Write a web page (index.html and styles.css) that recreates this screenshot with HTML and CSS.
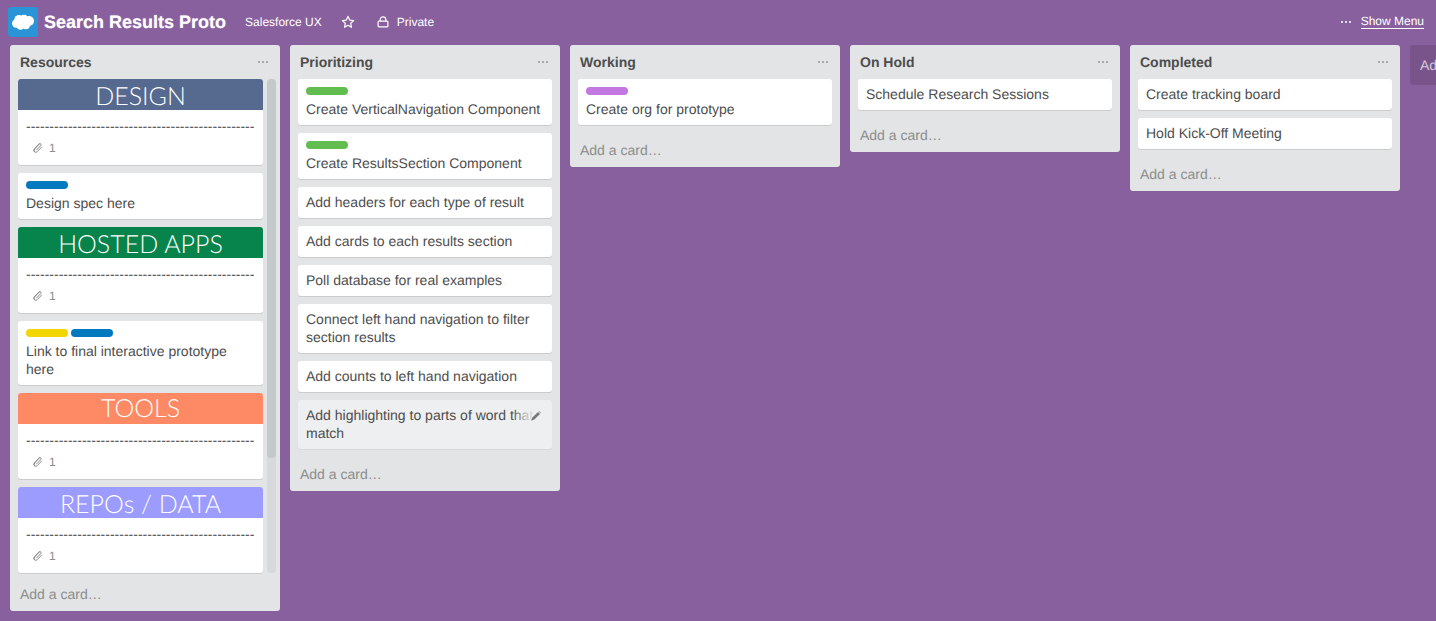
FILE: index.html
```html
<!DOCTYPE html>
<html lang="en">
<head>
<meta charset="utf-8">
<title>Search Results Proto</title>
<link rel="stylesheet" href="styles.css">
</head>
<body>
<header class="topbar">
  <div class="logo">
    <svg width="30" height="30" viewBox="0 0 30 30"><g fill="#fff"><circle cx="11" cy="12.5" r="4.6"/><circle cx="16" cy="11.6" r="3.8"/><circle cx="21" cy="14" r="5"/><circle cx="8.2" cy="16.5" r="4.2"/><circle cx="12.5" cy="18.5" r="4.2"/><circle cx="18" cy="18.5" r="3.8"/></g></svg>
  </div>
  <h1 class="board-title">Search Results Proto</h1>
  <span class="top-link team">Salesforce UX</span>
  <svg class="star" width="14" height="14" viewBox="0 0 14 14"><path d="M7 1.4l1.7 3.7 4 .5-3 2.7.8 4L7 10.3l-3.5 2 .8-4-3-2.7 4-.5z" fill="none" stroke="#fff" stroke-width="1.2" stroke-linejoin="round"/></svg>
  <svg class="lock" width="12" height="12" viewBox="0 0 12 12"><path d="M3.2 5V3.6a2.8 2.8 0 0 1 5.6 0V5" fill="none" stroke="#fff" stroke-width="1.2"/><rect x="1.1" y="5.1" width="9.8" height="5.8" rx="1" fill="none" stroke="#fff" stroke-width="1.2"/></svg>
  <span class="top-link private">Private</span>
  <div class="menu">
    <span class="menu-dots"><i></i><i></i><i></i></span>
    <span class="show-menu">Show Menu</span>
  </div>
</header>

<main class="board">
  <section class="list">
    <div class="list-head"><h2>Resources</h2><span class="dots"><i></i><i></i><i></i></span></div>
    <div class="scroll-row">
      <div class="cards narrow">
        <article class="card"><div class="cover c-design">DESIGN</div><div class="body"><p>-------------------------------------------------</p><div class="badge"><svg class="clip" width="12" height="12" viewBox="0 0 12 12"><path d="M10.3 4.6 5.6 9.5a2 2 0 0 1-2.9-2.8l4.6-4.9a1.2 1.2 0 0 1 1.8 1.7L4.7 8" transform="translate(-.4 .2)" fill="none" stroke="#8c8c8c" stroke-width="1"/><path d="M8.2 1.2 2.9 6.7a2.7 2.7 0 0 0-.1 3.3" fill="none" stroke="#8c8c8c" stroke-width="1"/></svg><span>1</span></div></div></article>
        <article class="card"><div class="pad"><div class="labels"><span class="label blue"></span></div><p>Design spec here</p></div></article>
        <article class="card"><div class="cover c-hosted">HOSTED APPS</div><div class="body"><p>-------------------------------------------------</p><div class="badge"><svg class="clip" width="12" height="12" viewBox="0 0 12 12"><path d="M10.3 4.6 5.6 9.5a2 2 0 0 1-2.9-2.8l4.6-4.9a1.2 1.2 0 0 1 1.8 1.7L4.7 8" transform="translate(-.4 .2)" fill="none" stroke="#8c8c8c" stroke-width="1"/><path d="M8.2 1.2 2.9 6.7a2.7 2.7 0 0 0-.1 3.3" fill="none" stroke="#8c8c8c" stroke-width="1"/></svg><span>1</span></div></div></article>
        <article class="card"><div class="pad"><div class="labels"><span class="label yellow"></span><span class="label blue"></span></div><p>Link to final interactive prototype here</p></div></article>
        <article class="card"><div class="cover c-tools">TOOLS</div><div class="body"><p>-------------------------------------------------</p><div class="badge"><svg class="clip" width="12" height="12" viewBox="0 0 12 12"><path d="M10.3 4.6 5.6 9.5a2 2 0 0 1-2.9-2.8l4.6-4.9a1.2 1.2 0 0 1 1.8 1.7L4.7 8" transform="translate(-.4 .2)" fill="none" stroke="#8c8c8c" stroke-width="1"/><path d="M8.2 1.2 2.9 6.7a2.7 2.7 0 0 0-.1 3.3" fill="none" stroke="#8c8c8c" stroke-width="1"/></svg><span>1</span></div></div></article>
        <article class="card"><div class="cover c-repos">REPOs / DATA</div><div class="body"><p>-------------------------------------------------</p><div class="badge"><svg class="clip" width="12" height="12" viewBox="0 0 12 12"><path d="M10.3 4.6 5.6 9.5a2 2 0 0 1-2.9-2.8l4.6-4.9a1.2 1.2 0 0 1 1.8 1.7L4.7 8" transform="translate(-.4 .2)" fill="none" stroke="#8c8c8c" stroke-width="1"/><path d="M8.2 1.2 2.9 6.7a2.7 2.7 0 0 0-.1 3.3" fill="none" stroke="#8c8c8c" stroke-width="1"/></svg><span>1</span></div></div></article>
      </div>
      <div class="track"><div class="thumb"></div></div>
    </div>
    <div class="add">Add a card…</div>
  </section>

  <section class="list">
    <div class="list-head"><h2>Prioritizing</h2><span class="dots"><i></i><i></i><i></i></span></div>
    <div class="cards">
      <article class="card"><div class="pad"><div class="labels"><span class="label green"></span></div><p>Create VerticalNavigation Component</p></div></article>
      <article class="card"><div class="pad"><div class="labels"><span class="label green"></span></div><p>Create ResultsSection Component</p></div></article>
      <article class="card"><div class="pad"><p>Add headers for each type of result</p></div></article>
      <article class="card"><div class="pad"><p>Add cards to each results section</p></div></article>
      <article class="card"><div class="pad"><p>Poll database for real examples</p></div></article>
      <article class="card"><div class="pad"><p>Connect left hand navigation to filter section results</p></div></article>
      <article class="card"><div class="pad"><p>Add counts to left hand navigation</p></div></article>
      <article class="card hover"><div class="pad"><p>Add highlighting to parts of word that match</p></div><div class="edit"><svg width="12" height="12" viewBox="0 0 12 12"><path d="M1.2 10.8 2.4 7.6 8 2l2 2-5.6 5.6z" fill="#7a7a7a"/><path d="M8.8 1.2l2 2" stroke="#b5b5b5" stroke-width="1.2"/></svg></div></article>
    </div>
    <div class="add">Add a card…</div>
  </section>

  <section class="list">
    <div class="list-head"><h2>Working</h2><span class="dots"><i></i><i></i><i></i></span></div>
    <div class="cards">
      <article class="card"><div class="pad"><div class="labels"><span class="label purple"></span></div><p>Create org for prototype</p></div></article>
    </div>
    <div class="add">Add a card…</div>
  </section>

  <section class="list">
    <div class="list-head"><h2>On Hold</h2><span class="dots"><i></i><i></i><i></i></span></div>
    <div class="cards">
      <article class="card"><div class="pad"><p>Schedule Research Sessions</p></div></article>
    </div>
    <div class="add">Add a card…</div>
  </section>

  <section class="list">
    <div class="list-head"><h2>Completed</h2><span class="dots"><i></i><i></i><i></i></span></div>
    <div class="cards">
      <article class="card"><div class="pad"><p>Create tracking board</p></div></article>
      <article class="card"><div class="pad"><p>Hold Kick-Off Meeting</p></div></article>
    </div>
    <div class="add">Add a card…</div>
  </section>

  <div class="add-list">Add a list…</div>
</main>
</body>
</html>
```
FILE: styles.css
```css
* { box-sizing: border-box; }
html, body { height: 100%; }
body {
  margin: 0;
  background: #89609e;
  font-family: "Liberation Sans", Arial, sans-serif;
  font-size: 14px;
  line-height: 18px;
  color: #4d4d4d;
  overflow: hidden;
  text-rendering: geometricPrecision;
}
p, h1, h2 { margin: 0; }

.topbar {
  display: flex;
  align-items: center;
  height: 45px;
  padding: 0 12px 1px 8px;
  color: #fff;
}
.logo {
  width: 30px;
  height: 30px;
  border-radius: 3px;
  background: #2a94d6;
  flex: none;
}
.logo svg { display: block; }
.board-title {
  margin-left: 6px;
  font-size: 18px;
  line-height: 24px;
  font-weight: 700;
  color: #fff;
  text-shadow: 0 0 1px rgba(255,255,255,.5);
}
.top-link { font-size: 12px; line-height: 16px; color: #fff; }
.team { margin-left: 19px; }
.star { margin-left: 19px; }
.lock { margin-left: 22px; }
.private { margin-left: 8px; }
.menu { margin-left: auto; display: flex; align-items: center; }
.menu-dots { display: flex; gap: 2px; margin-right: 10px; }
.menu-dots i { width: 2px; height: 2px; border-radius: 50%; background: #fff; }
.show-menu {
  font-size: 12px;
  line-height: 13px;
  color: #fff;
  border-bottom: 1px solid #fff;
}

.board {
  display: flex;
  align-items: flex-start;
  gap: 10px;
  padding-left: 10px;
}
.list {
  flex: none;
  width: 270px;
  background: #e2e4e6;
  border-radius: 3px;
  padding: 0 8px;
}
.list-head {
  display: flex;
  justify-content: space-between;
  align-items: center;
  height: 34px;
  padding: 0 4px 0 2px;
}
.list-head h2 { font-size: 14px; line-height: 18px; font-weight: 700; color: #4d4d4d; }
.dots { display: flex; gap: 2px; }
.dots i { width: 2px; height: 2px; border-radius: 50%; background: #999; }

.scroll-row {
  display: flex;
  gap: 4px;
  height: 498px;
  margin-right: -4px;
  overflow: hidden;
}
.narrow { flex: none; width: 245px; }
.track {
  flex: none;
  width: 9px;
  height: 494px;
  border-radius: 4px;
  background: #d6dadc;
}
.thumb { height: 379px; border-radius: 4px; background: #c4c9cc; }

.card {
  position: relative;
  background: #fff;
  border-radius: 3px;
  box-shadow: 0 1px 0 #ccc;
  margin-bottom: 8px;
  overflow: hidden;
}
.pad { padding: 6px 8px 7px; }
.labels { display: flex; gap: 3px; margin: 2px 0 5px; }
.label { width: 42px; height: 8px; border-radius: 4px; }
.green { background: #61bd4f; }
.blue { background: #0079bf; }
.yellow { background: #f2d600; }
.purple { background: #c377e0; }

.cover {
  height: 31px;
  text-align: center;
  font-family: Lato, "Open Sans", sans-serif;
  font-weight: 300;
  font-size: 25px;
  line-height: 35px;
  color: #fff;
}
.c-design { background: #56698f; }
.c-hosted { background: #07844b; }
.c-tools { background: #fd8a64; line-height: 30px; }
.c-repos { background: #9c9cff; line-height: 34px; }
.body { padding: 7px 8px 6px; white-space: nowrap; }
.badge {
  display: flex;
  align-items: center;
  height: 24px;
  padding: 2px 0 0 6px;
  gap: 5px;
  font-size: 12px;
  color: #8c8c8c;
}

.hover { background: #edeff0; box-shadow: 0 1px 0 #d6dadc; }
.edit {
  position: absolute;
  top: 2px;
  right: 8px;
  width: 32px;
  height: 26px;
  padding: 8px 0 0 18px;
  background: linear-gradient(to right, rgba(237,239,240,0), rgba(237,239,240,.85) 55%);
}
.edit svg { display: block; }

.add {
  height: 34px;
  padding: 0 2px;
  line-height: 34px;
  color: #8c8c8c;
}

.add-list {
  flex: none;
  width: 270px;
  height: 40px;
  padding: 0 10px;
  line-height: 40px;
  border-radius: 3px;
  background: rgba(0,0,0,.12);
  color: rgba(255,255,255,.7);
  font-weight: 400;
}
```
